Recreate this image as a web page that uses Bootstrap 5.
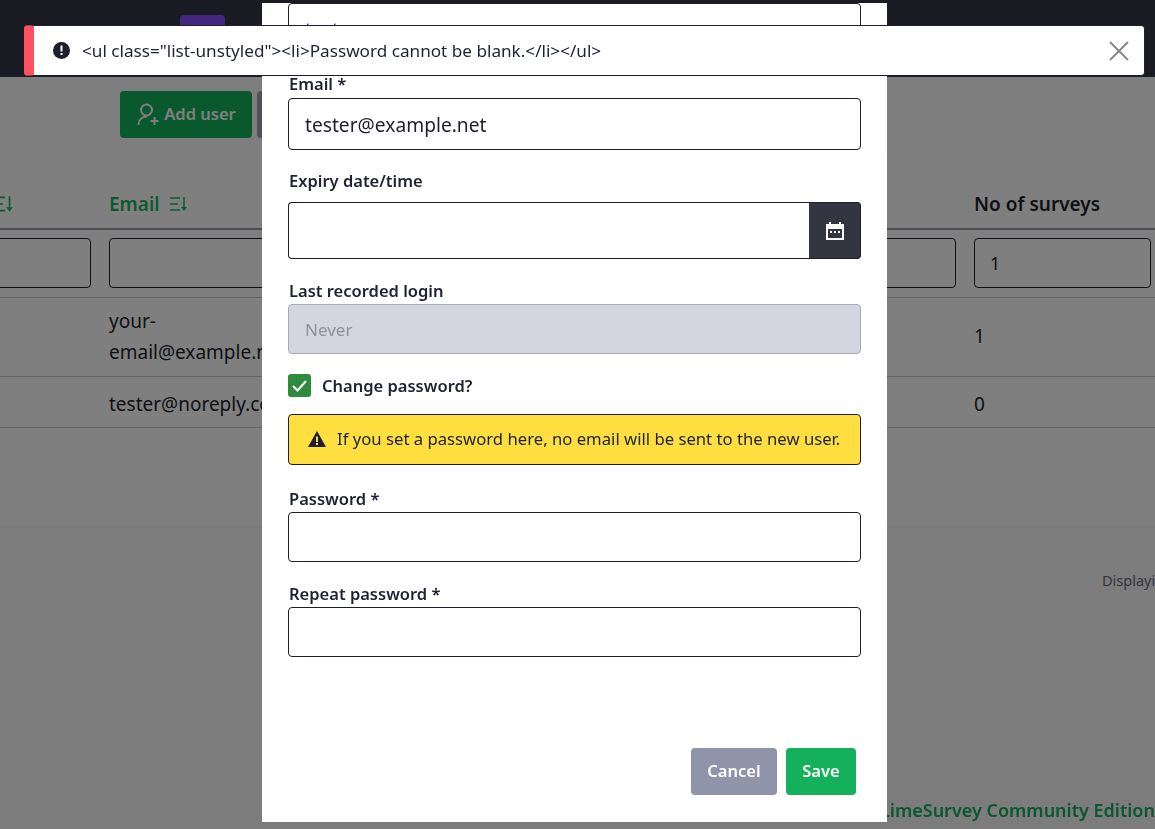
<!DOCTYPE html>
<html lang="en"><head><meta charset="utf-8"><title>Users</title>
<link href="https://cdn.jsdelivr.net/npm/bootstrap@5.3.0/dist/css/bootstrap.min.css" rel="stylesheet">
<style>
html,body{height:829px;overflow:hidden}
body{font-family:"Noto Sans","Liberation Sans",sans-serif;font-size:16px;color:#1e1f2c;background:#f8f8f8}
.topbar{height:77px;background:#343647;padding-left:180px;padding-top:15px}
.logo-tile{width:45px;height:45px;background:#864ffe;border-radius:4px}
.tools{height:73px;background:#fcfcfc;padding:14px 0 0 120px;gap:5px}
.btn-add{width:132px;height:47px;background:#15b05c;color:#fff;font-weight:600;font-size:16.5px;border:0;border-radius:4px;gap:4px;padding:0 0 1px}
.btn-add:hover{background:#15b05c;color:#fff}
.btn-other{width:120px;height:47px;background:#a0a1ad;border-radius:4px}
.tbl-wrap{height:375px;background:#fff;padding-top:30px}
.users{table-layout:fixed;width:1155px;margin:0;--bs-table-bg:transparent;color:#1e1f2c}
.users th,.users td{padding:8px 9px;vertical-align:middle;font-size:19px;border-color:#c9c9cc}
.users th{font-weight:600;font-size:19px;height:49px;border-bottom:2px solid #9b9ca6;padding-top:0;padding-bottom:0}
.users .c1{padding-left:0;width:100px}.users .c2{width:190px}.users .c4{width:190px;padding-right:4px}
.users .filt td{height:68px;vertical-align:top;padding-top:8px}
.users .r1 td{height:79px;line-height:31px}.users .r2 td{height:51px;padding-top:11px;padding-bottom:5px}
.sort-h{color:#18b562;white-space:nowrap}
.clip-i{margin-left:-6px;display:block;color:#18b562}
.sort-ic{margin-left:5px;vertical-align:-2px}
.filt-input{display:block;width:100%;height:50px;border:1px solid #1e1f2c;border-radius:4px;background:#fff;padding:0 15px;font-size:18px;color:#1e1f2c}
.c1 .filt-input{width:calc(100% + 10px);margin-left:-10px}
.displaying{height:50px;padding:45px 0 0 1102px;font-size:14.500px;color:#6c6d78;white-space:nowrap;background:transparent}
.site-foot{position:fixed;left:880px;top:797px;color:#15b05c;font-weight:600;font-size:18px;white-space:nowrap}
.dlg-wrap{padding-right:6px}
.dlg{width:625px;max-width:625px;margin:0 0 7px;flex-shrink:0}
.dlg-card{border:0;border-radius:0;padding:0 26px;color:#1e2233}
.fld-label{display:block;font-weight:600;font-size:16.500px;line-height:24px;margin:0;padding-left:1px;color:#1e2233}
.fld{display:block;width:100%;border:1px solid #1e1f2c;border-radius:4px;background:#fff;padding:0 16px;font-size:19.200px;color:#1e1f2c;height:50px}
.fld-52{height:52px}.gap-2px{margin-bottom:2px}.gap-9px{margin-bottom:9px}.gap-1px{margin-bottom:1px}
.fld-first{margin-bottom:17px}.fld-mail{margin-bottom:19px}.fld-date{margin-bottom:20px}
.date-grp{height:57px}.date-grp .fld{height:57px;border-radius:4px 0 0 4px;border-right:0}
.cal-btn{width:52px;flex:none;background:#333641;border-radius:0 4px 4px 0;border:1px solid #1e1f2c;border-left:0}
.fld-off{background:#d4d5de;border-color:#a9aab4;color:#8f909d;margin-bottom:20px;font-size:17px}
.chk-box{width:23px;height:23px;background:#2e8b3e;border-radius:3px;flex:none}
.chk-row{height:23px;gap:11px;margin-bottom:17px;font-weight:600;font-size:16.500px}
.chk-txt{padding-top:2px}
.warn{height:51px;background:#ffdf3f;border:1px solid #1e1f2c;border-radius:4px;padding:0 0 2px 19px;gap:11px;margin:0 0 22px;color:#1e2233;font-size:16.700px}
.fld-pw{margin-bottom:20px}
.dlg-foot{height:74px;margin-top:91px;margin-right:5px;gap:9px;align-items:flex-start}
.btn-cancel,.btn-save{height:47px;border:0;border-radius:4px;color:#fff;font-weight:600;font-size:16.500px;padding:0}
.btn-cancel{width:86px;background:#9094a8}.btn-save{width:70px;background:#15b05c}
.toast-bar{position:fixed;left:24px;top:25px;width:1121px;height:51px;background:#fff;border:1px solid #1e1f2c;border-left:10px solid #ff515f;border-radius:4px;z-index:1060;padding:0 15px 0 19px;gap:12px;font-size:17.150px;color:#1e2233;margin:0}
.x-close{margin-left:auto;background:none;border:0;padding:0;line-height:0}
</style></head>
<body>
<div class="topbar"><div class="logo-tile"></div></div>
<div class="tools d-flex align-items-start">
  <button class="btn btn-add d-flex align-items-center justify-content-center" type="button">
    <svg width="24" height="24" viewBox="0 0 24 24" fill="none" stroke="currentColor" stroke-width="2"><circle cx="10.5" cy="8" r="5.500"/><path d="M2.500 23c0-5 3-8.500 8.500-8.500"/><path d="M18.500 15v8M14.500 19h8"/></svg>Add user</button>
  <div class="btn-other"></div>
</div>
<div class="tbl-wrap">
<table class="table users">
<thead>
<tr><th class="c1"><svg class="clip-i" width="20" height="20" viewBox="0 0 18 18" fill="currentColor"><path fill="none" stroke="currentColor" stroke-width="1.500" d="M0 3h10M0 9h8M0 15h10M14 2v11"/><path d="M11 12h6l-3 4z"/></svg></th>
<th class="c2 sort-h">Email <svg class="sort-ic" width="18" height="18" viewBox="0 0 18 18" fill="currentColor"><path fill="none" stroke="currentColor" stroke-width="1.500" d="M0 3h10M0 9h8M0 15h10M14 2v11"/><path d="M11 12h6l-3 4z"/></svg></th>
<th></th><th class="c4">No of surveys</th></tr>
</thead>
<tbody>
<tr class="filt"><td class="c1"><input class="filt-input" type="text" aria-label="Name"></td><td><input class="filt-input" type="text" aria-label="Email"></td><td><input class="filt-input" type="text" aria-label="Created"></td><td class="c4"><input class="filt-input" type="text" value="1" aria-label="Surveys"></td></tr>
<tr class="r1"><td class="c1"></td><td>your-email@example.net</td><td></td><td class="c4">1</td></tr>
<tr class="r2"><td class="c1"></td><td class="text-nowrap">tester@noreply.com</td><td></td><td class="c4">0</td></tr>
</tbody></table>
</div>
<div class="displaying">Displaying 1-2 of 2 result(s).</div>
<div class="site-foot">LimeSurvey Community Edition</div>

<div class="modal-backdrop fade show"></div>
<div class="modal fade show d-flex flex-column justify-content-end align-items-center overflow-hidden dlg-wrap">
 <div class="modal-dialog dlg">
  <div class="modal-content dlg-card">
   <input class="fld fld-52 fld-first" type="text" value="tester" aria-label="Username">
   <label class="fld-label gap-2px" for="m">Email *</label>
   <input class="fld fld-52 fld-mail" id="m" type="text" value="tester@example.net">
   <label class="fld-label gap-9px" for="d">Expiry date/time</label>
   <div class="d-flex date-grp fld-date">
     <input class="fld" id="d" type="text">
     <div class="cal-btn d-flex align-items-center justify-content-center">
       <svg width="18" height="18" viewBox="0 0 18 18"><path fill="#fff" d="M3 0h2v2h8V0h2v2h3v16H0V2h3z"/><path fill="#333641" d="M2 7h14v9H2z"/><path fill="#fff" d="M4 9h2v2H4zM8 9h2v2H8zM12 9h2v2h-2z"/></svg>
     </div>
   </div>
   <label class="fld-label gap-1px" for="l">Last recorded login</label>
   <input class="fld fld-off" id="l" type="text" value="Never" disabled>
   <div class="d-flex align-items-center chk-row">
     <span class="chk-box d-flex align-items-center justify-content-center"><svg width="17" height="17" viewBox="0 0 17 17" fill="none" stroke="#fff" stroke-width="2"><path d="M2 9l4.500 4.500L15 4"/></svg></span>
     <span class="chk-txt">Change password?</span>
   </div>
   <div class="alert warn d-flex align-items-center">
     <svg width="18" height="16" viewBox="0 0 18 16"><path fill="#1e1f2c" d="M9 0l9 16H0z"/><path fill="#ffdf3f" d="M8 5.500h2v5.500H8zM8 12h2v2H8z"/></svg>
     <span>If you set a password here, no email will be sent to the new user.</span>
   </div>
   <label class="fld-label gap-1px" for="p">Password *</label>
   <input class="fld fld-pw" id="p" type="password">
   <label class="fld-label gap-1px" for="r">Repeat password *</label>
   <input class="fld" id="r" type="password">
   <div class="d-flex justify-content-end dlg-foot">
     <button class="btn btn-cancel" type="button">Cancel</button>
     <button class="btn btn-save" type="button">Save</button>
   </div>
  </div>
 </div>
</div>
<div class="alert toast-bar d-flex align-items-center">
  <svg width="17" height="17" viewBox="0 0 17 17"><circle cx="8.500" cy="8.500" r="8.500" fill="#1e1f2c"/><path fill="#fff" d="M7.500 3.500h2v6h-2zM7.500 11h2v2h-2z"/></svg>
  <span>&lt;ul class="list-unstyled"&gt;&lt;li&gt;Password cannot be blank.&lt;/li&gt;&lt;/ul&gt;</span>
  <button class="x-close" type="button" aria-label="Close"><svg width="20" height="20" viewBox="0 0 20 20" stroke="#888" stroke-width="2"><path d="M1 1l18 18M19 1L1 19"/></svg></button>
</div>
</body></html>
